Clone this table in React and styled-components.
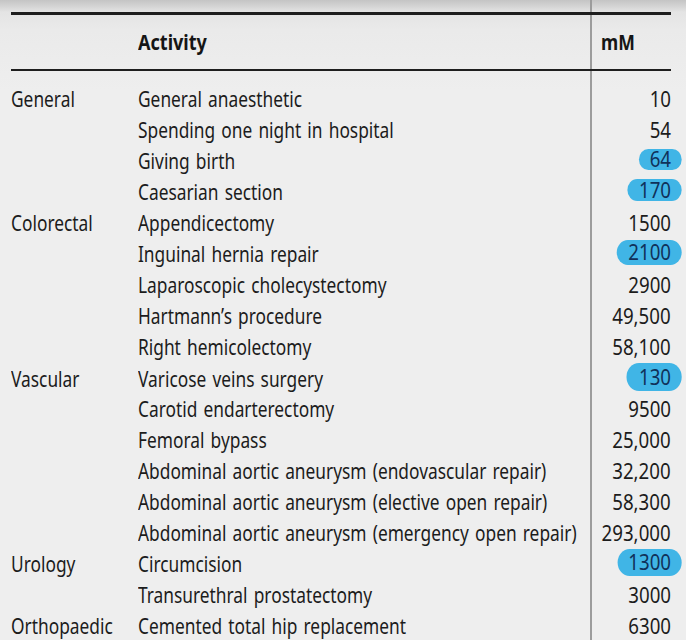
import React from "react";
import styled, { createGlobalStyle } from "styled-components";

const GlobalStyle = createGlobalStyle`
  html, body {
    margin: 0;
    padding: 0;
  }
  body {
    width: 686px;
    height: 640px;
    overflow: hidden;
    background:
      linear-gradient(to right, transparent 590px, #9c9c9c 590px, #9c9c9c 592px, transparent 592px),
      linear-gradient(to bottom, #c4c4c4 0, #d6d6d6 7px, #e4e4e4 12px, #eaeaea 30px, #eeeeee 90px);
    font-family: "Noto Sans", "Open Sans", sans-serif;
    color: #1c1c1c;
  }
`;

const Page = styled.div`
  padding: 12px 0 0 11px;
  width: 660px;
`;

const Rule = styled.div`
  height: ${(p) => p.$thick}px;
  background: #1e1e1e;
`;

const Row = styled.div`
  display: grid;
  grid-template-columns: 127px 453px 80px;
  align-items: center;
  height: ${(p) => p.$h || 31}px;
`;

const HeadCell = styled.div`
  font-weight: 700;
  font-size: 21px;
  color: #151515;
  padding-left: ${(p) => (p.$num ? "10px" : "0")};
`;

const Body = styled.div`
  padding-top: 13px;
`;

const Cell = styled.div`
  font-size: 21px;
  line-height: 31px;
  white-space: nowrap;
  word-spacing: 2px;
  text-align: ${(p) => (p.$num ? "right" : "left")};
`;

/* the reference face is a condensed humanist sans: squeeze Noto Sans to match */
const Squeeze = styled.span`
  display: inline-block;
  transform: scaleX(${(p) => p.$x});
  transform-origin: ${(p) => (p.$num ? "right" : "left")} center;
`;

const Pill = styled.span`
  display: inline-block;
  vertical-align: 2px;
  background: #40b5e6;
  color: #10315a;
  height: ${(p) => p.$h}px;
  line-height: ${(p) => p.$h}px;
  border-radius: 15px;
  padding: 0 12px 0 ${(p) => p.$left}px;
  margin-right: -12px;
`;

const rows = [
  ["General", "General anaesthetic", "10"],
  ["", "Spending one night in hospital", "54"],
  ["", "Giving birth", "64", { h: 21, left: 12 }],
  ["", "Caesarian section", "170", { h: 22, left: 13 }],
  ["Colorectal", "Appendicectomy", "1500"],
  ["", "Inguinal hernia repair", "2100", { h: 25, left: 13 }],
  ["", "Laparoscopic cholecystectomy", "2900"],
  ["", "Hartmann’s procedure", "49,500"],
  ["", "Right hemicolectomy", "58,100"],
  ["Vascular", "Varicose veins surgery", "130", { h: 28, left: 14 }],
  ["", "Carotid endarterectomy", "9500"],
  ["", "Femoral bypass", "25,000"],
  ["", "Abdominal aortic aneurysm (endovascular repair)", "32,200"],
  ["", "Abdominal aortic aneurysm (elective open repair)", "58,300"],
  ["", "Abdominal aortic aneurysm (emergency open repair)", "293,000"],
  ["Urology", "Circumcision", "1300", { h: 27, left: 12 }],
  ["", "Transurethral prostatectomy", "3000"],
  ["Orthopaedic", "Cemented total hip replacement", "6300"],
];

export default function App() {
  return (
    <>
      <GlobalStyle />
      <Page>
        <Rule $thick={3} />
        <Row $h={54}>
          <HeadCell />
          <HeadCell>
            <Squeeze $x={0.86}>Activity</Squeeze>
          </HeadCell>
          <HeadCell $num>
            <Squeeze $x={0.84}>mM</Squeeze>
          </HeadCell>
        </Row>
        <Rule $thick={2} />
        <Body>
          {rows.map(([group, activity, value, pill], i) => (
            <Row key={i}>
              <Cell>
                <Squeeze $x={0.825}>{group}</Squeeze>
              </Cell>
              <Cell>
                <Squeeze $x={0.825}>{activity}</Squeeze>
              </Cell>
              <Cell $num>
                <Squeeze $x={0.89} $num>
                  {pill ? (
                    <Pill $h={pill.h} $left={pill.left}>
                      {value}
                    </Pill>
                  ) : (
                    value
                  )}
                </Squeeze>
              </Cell>
            </Row>
          ))}
        </Body>
      </Page>
    </>
  );
}
